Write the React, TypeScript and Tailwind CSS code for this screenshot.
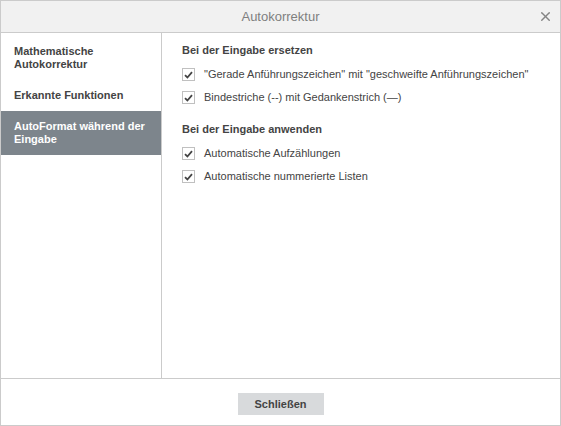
import { X } from 'lucide-react';

const SECTIONS = [
  { id: 'math', label: 'Mathematische Autokorrektur' },
  { id: 'func', label: 'Erkannte Funktionen' },
  { id: 'auto', label: 'AutoFormat während der Eingabe', active: true },
];

const GROUPS = [
  {
    title: 'Bei der Eingabe ersetzen',
    items: [
      '"Gerade Anführungszeichen" mit "geschweifte Anführungszeichen"',
      'Bindestriche (--) mit Gedankenstrich (—)',
    ],
  },
  {
    title: 'Bei der Eingabe anwenden',
    items: ['Automatische Aufzählungen', 'Automatische nummerierte Listen'],
  },
];

function Check({ label }: { label: string }) {
  return (
    <label className="flex items-center gap-[9px] h-[23px]">
      <span className="w-[13px] h-[13px] border border-[#c0c0c0] bg-white flex items-center justify-center">
        <svg width="9" height="8" viewBox="0 0 9 8" fill="none">
          <path d="M1 4.2 L3.4 6.5 L8 1.2" stroke="#444" strokeWidth="1.8" />
        </svg>
      </span>
      <span className="text-[11px] text-[#444]">{label}</span>
    </label>
  );
}

export default function App() {
  return (
    <div
      className="w-[561px] h-[426px] border border-[#cbcbcb] bg-white flex flex-col"
      style={{ fontFamily: '"Liberation Sans", Arial, sans-serif' }}
    >
      <div className="h-[32px] shrink-0 bg-[#f1f1f1] border-b border-[#cbcbcb] flex items-center justify-center relative">
        <span className="text-[13px] text-[#7f7f7f]">Autokorrektur</span>
        <X size={15} strokeWidth={2.2} className="absolute right-[7px] top-[8px] text-[#848484]" />
      </div>

      <div className="flex-1 flex min-h-0">
        <div className="w-[161px] shrink-0 border-r border-[#cbcbcb] pt-[3px]">
          {SECTIONS.map((s) => (
            <div
              key={s.id}
              className={
                s.active
                  ? 'px-[13px] py-[9px] bg-[#7d858c] text-white text-[11px] font-bold leading-[13px]'
                  : 'px-[13px] py-[9px] text-[#444] text-[11px] font-bold leading-[13px]'
              }
            >
              {s.label}
            </div>
          ))}
        </div>

        <div className="flex-1 pl-[20px] pt-[10px] flex flex-col gap-[13px]">
          {GROUPS.map((g) => (
            <div key={g.title}>
              <div className="text-[11px] font-bold text-[#444] leading-[14px] mb-[6px]">{g.title}</div>
              {g.items.map((it) => (
                <Check key={it} label={it} />
              ))}
            </div>
          ))}
        </div>
      </div>

      <div className="h-[47px] shrink-0 border-t border-[#cbcbcb] flex justify-center pt-[14px]">
        <button className="w-[86px] h-[22px] bg-[#d8dadc] text-[11px] font-bold text-[#444]">Schließen</button>
      </div>
    </div>
  );
}
